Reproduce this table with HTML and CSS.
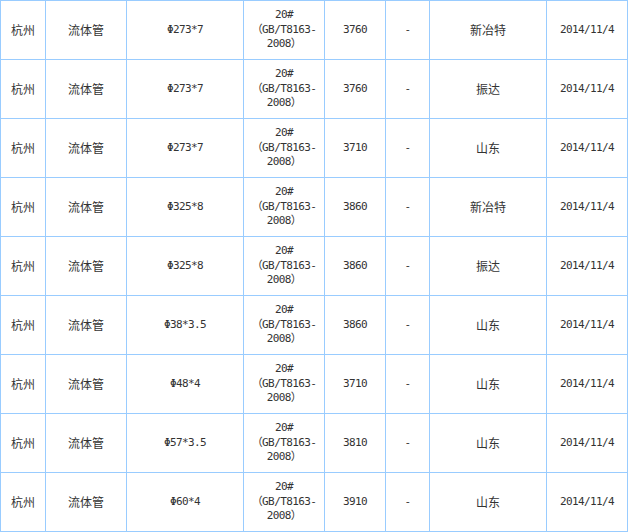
FILE: index.html
```html
<!DOCTYPE html>
<html lang="zh">
<head>
<meta charset="utf-8">
<title>流体管价格</title>
<link rel="stylesheet" href="styles.css">
</head>
<body>
<table class="price-table">
  <colgroup>
    <col class="c1"><col class="c2"><col class="c3"><col class="c4">
    <col class="c5"><col class="c6"><col class="c7"><col class="c8">
  </colgroup>
  <tbody>
    <tr><td class="cn">杭州</td><td class="cn">流体管</td><td>Φ273*7</td><td>20#<br>（GB/T8163-<br>2008）</td><td>3760</td><td>-</td><td class="cn">新冶特</td><td>2014/11/4</td></tr>
    <tr><td class="cn">杭州</td><td class="cn">流体管</td><td>Φ273*7</td><td>20#<br>（GB/T8163-<br>2008）</td><td>3760</td><td>-</td><td class="cn">振达</td><td>2014/11/4</td></tr>
    <tr><td class="cn">杭州</td><td class="cn">流体管</td><td>Φ273*7</td><td>20#<br>（GB/T8163-<br>2008）</td><td>3710</td><td>-</td><td class="cn">山东</td><td>2014/11/4</td></tr>
    <tr><td class="cn">杭州</td><td class="cn">流体管</td><td>Φ325*8</td><td>20#<br>（GB/T8163-<br>2008）</td><td>3860</td><td>-</td><td class="cn">新冶特</td><td>2014/11/4</td></tr>
    <tr><td class="cn">杭州</td><td class="cn">流体管</td><td>Φ325*8</td><td>20#<br>（GB/T8163-<br>2008）</td><td>3860</td><td>-</td><td class="cn">振达</td><td>2014/11/4</td></tr>
    <tr><td class="cn">杭州</td><td class="cn">流体管</td><td>Φ38*3.5</td><td>20#<br>（GB/T8163-<br>2008）</td><td>3860</td><td>-</td><td class="cn">山东</td><td>2014/11/4</td></tr>
    <tr><td class="cn">杭州</td><td class="cn">流体管</td><td>Φ48*4</td><td>20#<br>（GB/T8163-<br>2008）</td><td>3710</td><td>-</td><td class="cn">山东</td><td>2014/11/4</td></tr>
    <tr><td class="cn">杭州</td><td class="cn">流体管</td><td>Φ57*3.5</td><td>20#<br>（GB/T8163-<br>2008）</td><td>3810</td><td>-</td><td class="cn">山东</td><td>2014/11/4</td></tr>
    <tr><td class="cn">杭州</td><td class="cn">流体管</td><td>Φ60*4</td><td>20#<br>（GB/T8163-<br>2008）</td><td>3910</td><td>-</td><td class="cn">山东</td><td>2014/11/4</td></tr>
  </tbody>
</table>
</body>
</html>
```
FILE: styles.css
```css
html, body {
  margin: 0;
  padding: 0;
  background: #ffffff;
}

.price-table {
  table-layout: fixed;
  width: 628px;
  border-collapse: separate;
  border-spacing: 1px;
  background: #99ccff;
}

.c1 { width: 44px; }
.c2 { width: 80px; }
.c3 { width: 116px; }
.c4 { width: 80px; }
.c5 { width: 60px; }
.c6 { width: 43px; }
.c7 { width: 116px; }
.c8 { width: 80px; }

.price-table td {
  box-sizing: border-box;
  height: 58px;
  padding: 0;
  background: #ffffff;
  color: #333333;
  text-align: center;
  vertical-align: middle;
  font-family: "DejaVu Sans Mono", "Noto Sans CJK SC", monospace;
  font-size: 11px;
  line-height: 14.5px;
  letter-spacing: -0.6px;
  white-space: nowrap;
}

.price-table td.cn {
  font-family: "Noto Sans CJK SC", sans-serif;
  font-size: 12px;
  line-height: 14px;
  letter-spacing: 0;
  padding-bottom: 1px;
}
```
